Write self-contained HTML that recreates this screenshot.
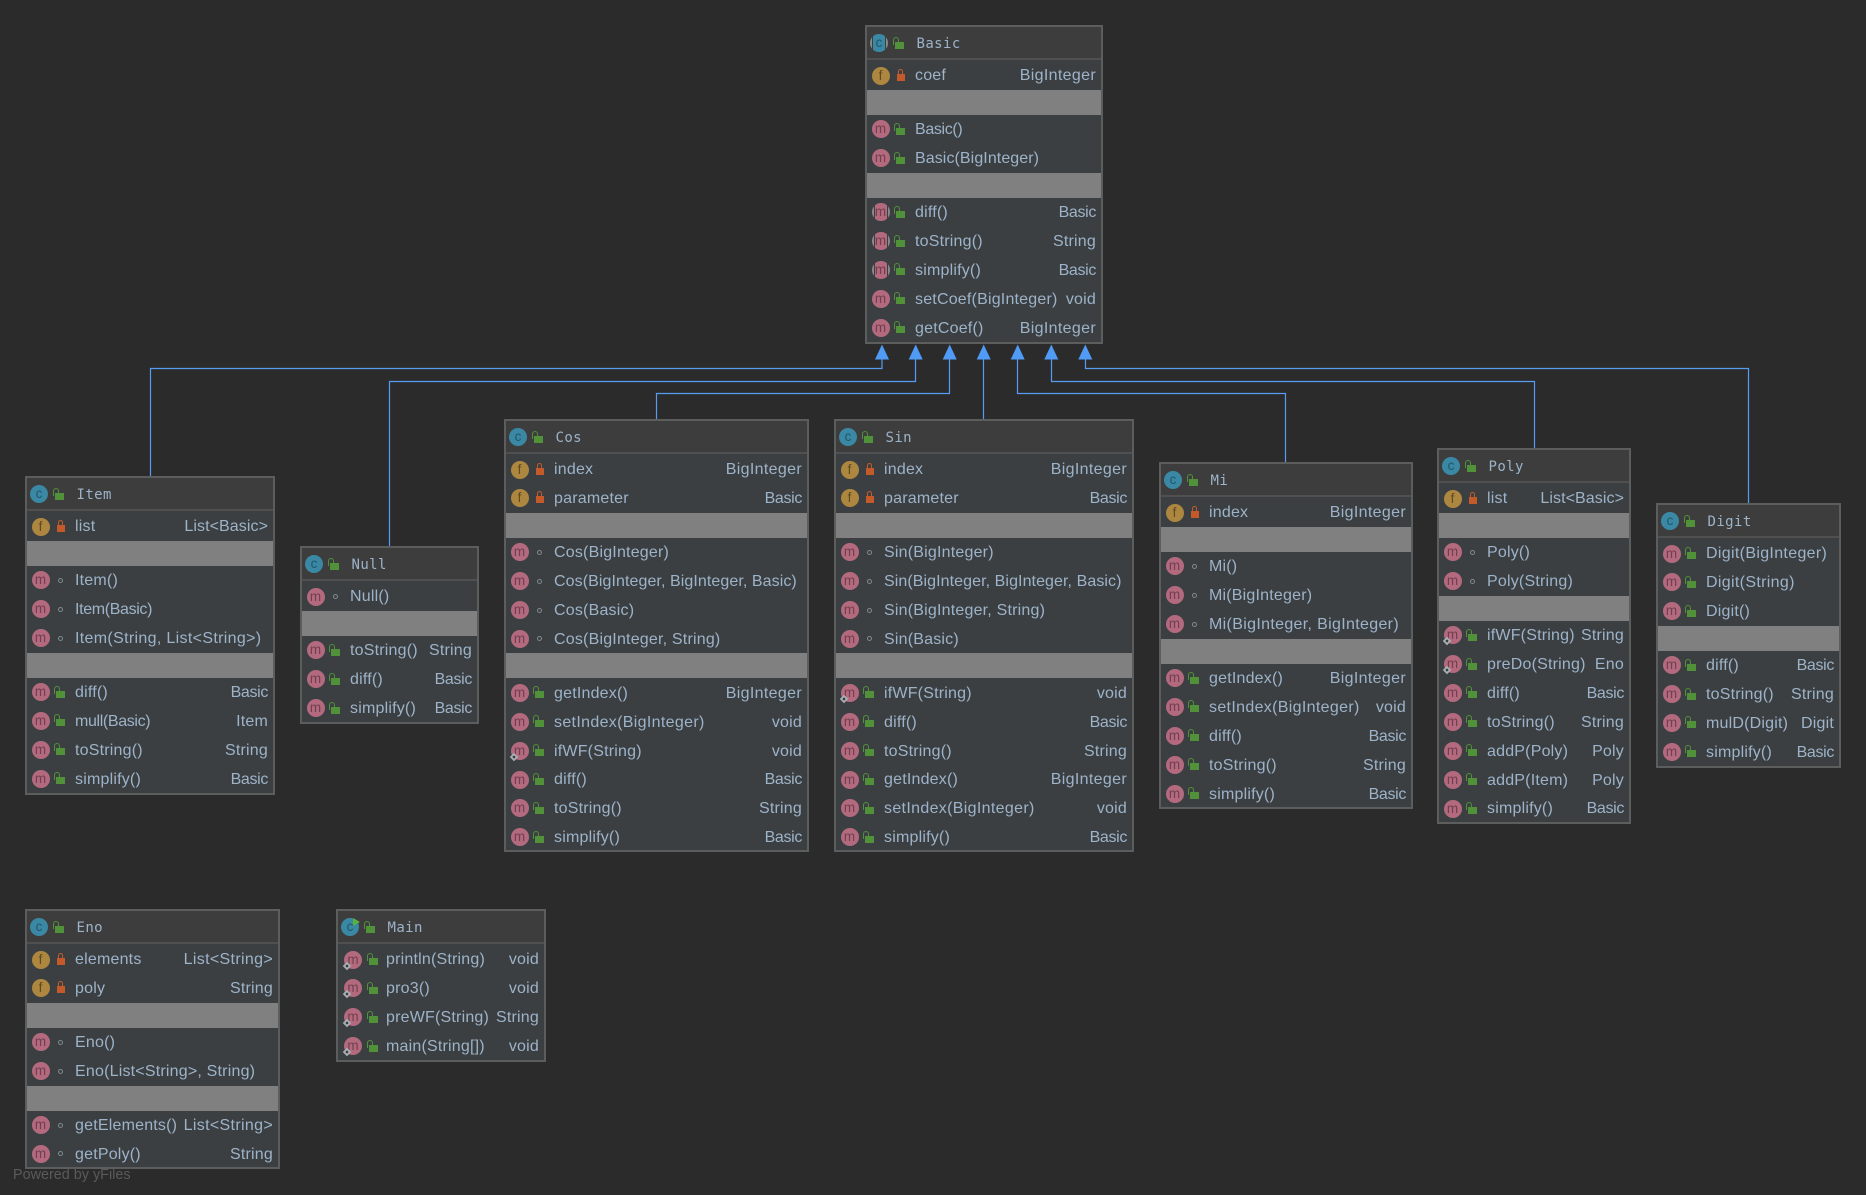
<!DOCTYPE html>
<html><head><meta charset="utf-8"><title>Diagram</title>
<style>
html,body{margin:0;padding:0;background:#2b2b2b}
body{width:1866px;height:1195px;position:relative;overflow:hidden;font:16px/1 "Liberation Sans",sans-serif;color:#9db3c9}
svg.l{position:absolute;left:0;top:0}
.c{position:absolute;box-sizing:border-box;border:2px solid #5c5d5d;background:#3c3f41;overflow:hidden}
.h{height:33px;box-sizing:border-box;background:#3d3d3d;border-bottom:2px solid #505050;margin-bottom:1px;position:relative;font:14px/34px "DejaVu Sans Mono","Liberation Mono",monospace;letter-spacing:.4px;padding-left:49.5px;color:#9db3c9}
.g{height:25px;background:#808080}
.r{height:28.9px;box-sizing:border-box;position:relative;display:flex;justify-content:space-between;align-items:center;padding:2px 5px 0 48px;white-space:nowrap;letter-spacing:.2px}
em{font-style:normal}
.b{letter-spacing:-.35px}
.n{letter-spacing:.08px}
.w{letter-spacing:.33px}
i{position:absolute;left:4.5px;top:5.5px;width:18px;height:18px;border-radius:50%;text-align:center;font:normal 13.5px/17px "Liberation Sans",sans-serif;letter-spacing:0}
i.m{background:#b36a7e;color:#713f4f}
i.f{background:#ad873f;color:#5f4a22}
i.k{background:#3a88a4;color:#20576c;left:3px;top:6.5px}
i.a{background:linear-gradient(90deg,#8a8a8a 0 10%,#3c3f41 10% 17%,#b36a7e 17% 83%,#3c3f41 83% 90%,#8a8a8a 90%)}
i.k.a{background:linear-gradient(90deg,#8a8a8a 0 10%,#3c3f41 10% 17%,#3a88a4 17% 83%,#3c3f41 83% 90%,#8a8a8a 90%)}
s{position:absolute;left:0;top:12px;width:6px;height:6px;transform:rotate(45deg);background:radial-gradient(circle,#3c3f41 0 1.2px,#a8b0b4 1.5px)}
s.p{transform:none;background:none;left:12px;top:0;width:0;height:0;border-left:7px solid #59b23c;border-top:4px solid transparent;border-bottom:4px solid transparent}
b{position:absolute;display:block}
b.u{left:27px;top:8px;width:11px;height:12px}
b.u:before{content:"";position:absolute;left:0;top:0;width:4px;height:7px;border:1.5px solid #50913a;border-bottom:0;border-radius:4px 4px 0 0}
b.u:after{content:"";position:absolute;left:2px;top:5px;width:9px;height:7px;background:#50913a}
.h b.u{left:26px;top:10px}
b.v{left:29.5px;top:7.5px;width:8px;height:12px}
b.v:before{content:"";position:absolute;left:1px;top:0;width:3px;height:5px;border:1.5px solid #c45a2a;border-bottom:0;border-radius:3px 3px 0 0}
b.v:after{content:"";position:absolute;left:0;top:5px;width:8px;height:7px;background:#c45a2a}
b.d{left:30.5px;top:12px;width:3px;height:3px;border:1.5px solid #7f8b91;border-radius:50%}
.f1{position:absolute;left:13px;top:1167px;font-size:14.4px;line-height:17px;color:#5a5a5a}
</style></head><body>
<svg class="l" width="1866" height="1195" fill="none" stroke="#569cf2" stroke-width="1.2">
<path d="M150.5 477V368.5H882V358"/>
<path d="M389.5 547V381.5H915.5V358"/>
<path d="M656.5 420V393.5H949.5V358"/>
<path d="M983.5 420V358"/>
<path d="M1285.5 463V393.5H1017.5V358"/>
<path d="M1534.5 448V381.5H1051.5V358"/>
<path d="M1748.5 504V368.5H1085.5V358"/>
<g fill="#4f9bf5" stroke="none">
<path d="M882 344.5l7 15h-14z"/><path d="M915.7 344.5l7 15h-14z"/><path d="M949.7 344.5l7 15h-14z"/><path d="M983.7 344.5l7 15h-14z"/><path d="M1017.7 344.5l7 15h-14z"/><path d="M1051.3 344.5l7 15h-14z"/><path d="M1085.3 344.5l7 15h-14z"/>
</g></svg>

<div class="c" style="left:865px;top:25px;width:238px;height:319px">
<div class="h"><i class="k a">c</i><b class="u"></b>Basic</div>
<div class="r"><i class="f">f</i><b class="v"></b><span>coef</span><em class="w">BigInteger</em></div>
<div class="g"></div>
<div class="r"><i class="m">m</i><b class="u"></b><span class="b">Basic()</span></div>
<div class="r"><i class="m">m</i><b class="u"></b><span class="n">Basic(BigInteger)</span></div>
<div class="g"></div>
<div class="r"><i class="m a">m</i><b class="u"></b><span>diff()</span><em class="b">Basic</em></div>
<div class="r"><i class="m a">m</i><b class="u"></b><span>toString()</span><em>String</em></div>
<div class="r"><i class="m a">m</i><b class="u"></b><span>simplify()</span><em class="b">Basic</em></div>
<div class="r"><i class="m">m</i><b class="u"></b><span>setCoef(BigInteger)</span><em>void</em></div>
<div class="r"><i class="m">m</i><b class="u"></b><span>getCoef()</span><em class="w">BigInteger</em></div>
</div>

<div class="c" style="left:25px;top:476px;width:250px;height:319px">
<div class="h"><i class="k">c</i><b class="u"></b>Item</div>
<div class="r"><i class="f">f</i><b class="v"></b><span>list</span><em class="n">List&lt;Basic&gt;</em></div>
<div class="g"></div>
<div class="r"><i class="m">m</i><b class="d"></b><span>Item()</span></div>
<div class="r"><i class="m">m</i><b class="d"></b><span class="b">Item(Basic)</span></div>
<div class="r"><i class="m">m</i><b class="d"></b><span class="w">Item(String, List&lt;String&gt;)</span></div>
<div class="g"></div>
<div class="r"><i class="m">m</i><b class="u"></b><span>diff()</span><em class="b">Basic</em></div>
<div class="r"><i class="m">m</i><b class="u"></b><span class="b">mull(Basic)</span><em>Item</em></div>
<div class="r"><i class="m">m</i><b class="u"></b><span>toString()</span><em>String</em></div>
<div class="r"><i class="m">m</i><b class="u"></b><span>simplify()</span><em class="b">Basic</em></div>
</div>

<div class="c" style="left:300px;top:546px;width:179px;height:178px">
<div class="h"><i class="k">c</i><b class="u"></b>Null</div>
<div class="r"><i class="m">m</i><b class="d"></b><span>Null()</span></div>
<div class="g"></div>
<div class="r"><i class="m">m</i><b class="u"></b><span>toString()</span><em>String</em></div>
<div class="r"><i class="m">m</i><b class="u"></b><span>diff()</span><em class="b">Basic</em></div>
<div class="r"><i class="m">m</i><b class="u"></b><span>simplify()</span><em class="b">Basic</em></div>
</div>

<div class="c" style="left:504px;top:419px;width:305px;height:433px">
<div class="h"><i class="k">c</i><b class="u"></b>Cos</div>
<div class="r"><i class="f">f</i><b class="v"></b><span>index</span><em class="w">BigInteger</em></div>
<div class="r"><i class="f">f</i><b class="v"></b><span>parameter</span><em class="b">Basic</em></div>
<div class="g"></div>
<div class="r"><i class="m">m</i><b class="d"></b><span>Cos(BigInteger)</span></div>
<div class="r"><i class="m">m</i><b class="d"></b><span class="n">Cos(BigInteger, BigInteger, Basic)</span></div>
<div class="r"><i class="m">m</i><b class="d"></b><span>Cos(Basic)</span></div>
<div class="r"><i class="m">m</i><b class="d"></b><span>Cos(BigInteger, String)</span></div>
<div class="g"></div>
<div class="r"><i class="m">m</i><b class="u"></b><span>getIndex()</span><em class="w">BigInteger</em></div>
<div class="r"><i class="m">m</i><b class="u"></b><span class="w">setIndex(BigInteger)</span><em>void</em></div>
<div class="r"><i class="m">m<s></s></i><b class="u"></b><span>ifWF(String)</span><em>void</em></div>
<div class="r"><i class="m">m</i><b class="u"></b><span>diff()</span><em class="b">Basic</em></div>
<div class="r"><i class="m">m</i><b class="u"></b><span>toString()</span><em>String</em></div>
<div class="r"><i class="m">m</i><b class="u"></b><span>simplify()</span><em class="b">Basic</em></div>
</div>

<div class="c" style="left:834px;top:419px;width:300px;height:433px">
<div class="h"><i class="k">c</i><b class="u"></b>Sin</div>
<div class="r"><i class="f">f</i><b class="v"></b><span>index</span><em class="w">BigInteger</em></div>
<div class="r"><i class="f">f</i><b class="v"></b><span>parameter</span><em class="b">Basic</em></div>
<div class="g"></div>
<div class="r"><i class="m">m</i><b class="d"></b><span>Sin(BigInteger)</span></div>
<div class="r"><i class="m">m</i><b class="d"></b><span class="n">Sin(BigInteger, BigInteger, Basic)</span></div>
<div class="r"><i class="m">m</i><b class="d"></b><span>Sin(BigInteger, String)</span></div>
<div class="r"><i class="m">m</i><b class="d"></b><span>Sin(Basic)</span></div>
<div class="g"></div>
<div class="r"><i class="m">m<s></s></i><b class="u"></b><span>ifWF(String)</span><em>void</em></div>
<div class="r"><i class="m">m</i><b class="u"></b><span>diff()</span><em class="b">Basic</em></div>
<div class="r"><i class="m">m</i><b class="u"></b><span>toString()</span><em>String</em></div>
<div class="r"><i class="m">m</i><b class="u"></b><span>getIndex()</span><em class="w">BigInteger</em></div>
<div class="r"><i class="m">m</i><b class="u"></b><span class="w">setIndex(BigInteger)</span><em>void</em></div>
<div class="r"><i class="m">m</i><b class="u"></b><span>simplify()</span><em class="b">Basic</em></div>
</div>

<div class="c" style="left:1159px;top:462px;width:254px;height:347px">
<div class="h"><i class="k">c</i><b class="u"></b>Mi</div>
<div class="r"><i class="f">f</i><b class="v"></b><span>index</span><em class="w">BigInteger</em></div>
<div class="g"></div>
<div class="r"><i class="m">m</i><b class="d"></b><span>Mi()</span></div>
<div class="r"><i class="m">m</i><b class="d"></b><span>Mi(BigInteger)</span></div>
<div class="r"><i class="m">m</i><b class="d"></b><span class="w">Mi(BigInteger, BigInteger)</span></div>
<div class="g"></div>
<div class="r"><i class="m">m</i><b class="u"></b><span>getIndex()</span><em class="w">BigInteger</em></div>
<div class="r"><i class="m">m</i><b class="u"></b><span class="w">setIndex(BigInteger)</span><em>void</em></div>
<div class="r"><i class="m">m</i><b class="u"></b><span>diff()</span><em class="b">Basic</em></div>
<div class="r"><i class="m">m</i><b class="u"></b><span>toString()</span><em>String</em></div>
<div class="r"><i class="m">m</i><b class="u"></b><span>simplify()</span><em class="b">Basic</em></div>
</div>

<div class="c" style="left:1437px;top:448px;width:194px;height:376px">
<div class="h"><i class="k">c</i><b class="u"></b>Poly</div>
<div class="r"><i class="f">f</i><b class="v"></b><span>list</span><em class="n">List&lt;Basic&gt;</em></div>
<div class="g"></div>
<div class="r"><i class="m">m</i><b class="d"></b><span>Poly()</span></div>
<div class="r"><i class="m">m</i><b class="d"></b><span>Poly(String)</span></div>
<div class="g"></div>
<div class="r"><i class="m">m<s></s></i><b class="u"></b><span>ifWF(String)</span><em>String</em></div>
<div class="r"><i class="m">m<s></s></i><b class="u"></b><span>preDo(String)</span><em>Eno</em></div>
<div class="r"><i class="m">m</i><b class="u"></b><span>diff()</span><em class="b">Basic</em></div>
<div class="r"><i class="m">m</i><b class="u"></b><span>toString()</span><em>String</em></div>
<div class="r"><i class="m">m</i><b class="u"></b><span>addP(Poly)</span><em>Poly</em></div>
<div class="r"><i class="m">m</i><b class="u"></b><span>addP(Item)</span><em>Poly</em></div>
<div class="r"><i class="m">m</i><b class="u"></b><span>simplify()</span><em class="b">Basic</em></div>
</div>

<div class="c" style="left:1656px;top:503px;width:185px;height:265px">
<div class="h"><i class="k">c</i><b class="u"></b>Digit</div>
<div class="r"><i class="m">m</i><b class="u"></b><span class="w">Digit(BigInteger)</span></div>
<div class="r"><i class="m">m</i><b class="u"></b><span class="w">Digit(String)</span></div>
<div class="r"><i class="m">m</i><b class="u"></b><span>Digit()</span></div>
<div class="g"></div>
<div class="r"><i class="m">m</i><b class="u"></b><span>diff()</span><em class="b">Basic</em></div>
<div class="r"><i class="m">m</i><b class="u"></b><span>toString()</span><em>String</em></div>
<div class="r"><i class="m">m</i><b class="u"></b><span>mulD(Digit)</span><em>Digit</em></div>
<div class="r"><i class="m">m</i><b class="u"></b><span>simplify()</span><em class="b">Basic</em></div>
</div>

<div class="c" style="left:25px;top:909px;width:255px;height:260px">
<div class="h"><i class="k">c</i><b class="u"></b>Eno</div>
<div class="r"><i class="f">f</i><b class="v"></b><span>elements</span><em class="w">List&lt;String&gt;</em></div>
<div class="r"><i class="f">f</i><b class="v"></b><span>poly</span><em>String</em></div>
<div class="g"></div>
<div class="r"><i class="m">m</i><b class="d"></b><span>Eno()</span></div>
<div class="r"><i class="m">m</i><b class="d"></b><span>Eno(List&lt;String&gt;, String)</span></div>
<div class="g"></div>
<div class="r"><i class="m">m</i><b class="d"></b><span>getElements()</span><em class="w">List&lt;String&gt;</em></div>
<div class="r"><i class="m">m</i><b class="d"></b><span>getPoly()</span><em>String</em></div>
</div>

<div class="c" style="left:336px;top:909px;width:210px;height:153px">
<div class="h"><i class="k">c<s class="p"></s></i><b class="u"></b>Main</div>
<div class="r"><i class="m" style="left:6px">m<s></s></i><b class="u" style="left:28.5px"></b><span>println(String)</span><em>void</em></div>
<div class="r"><i class="m" style="left:6px">m<s></s></i><b class="u" style="left:28.5px"></b><span>pro3()</span><em>void</em></div>
<div class="r"><i class="m" style="left:6px">m<s></s></i><b class="u" style="left:28.5px"></b><span>preWF(String)</span><em>String</em></div>
<div class="r"><i class="m" style="left:6px">m<s></s></i><b class="u" style="left:28.5px"></b><span>main(String[])</span><em>void</em></div>
</div>

<div class="f1">Powered by yFiles</div>
</body></html>
